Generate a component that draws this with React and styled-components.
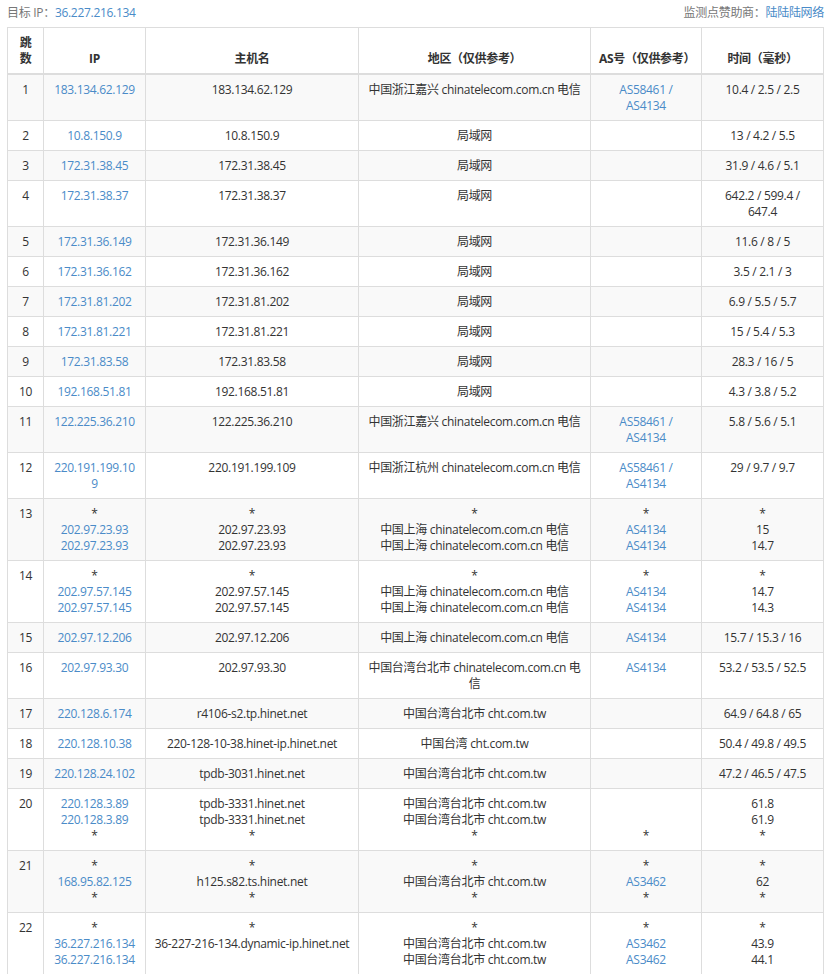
import React from "react";
import styled, { createGlobalStyle } from "styled-components";

const Global = createGlobalStyle`
  body { margin: 0; background: #fff; font-family: "Open Sans", "Noto Sans CJK SC", sans-serif; font-size: 12px; color: #333; letter-spacing: -0.3px; }
`;

const Page = styled.div`
  padding: 0 7px;
`;
const TopBar = styled.div`
  display: flex;
  justify-content: space-between;
  align-items: center;
  height: 27px;
  color: #777;
  line-height: 16px;
  padding-bottom: 2px;
  box-sizing: border-box;
`;
const Link = styled.span`
  color: #4a8bc8;
`;
const Table = styled.table`
  width: 816px;
  border-collapse: collapse;
  table-layout: fixed;
`;
const Th = styled.th`
  border: 1px solid #ddd;
  border-bottom: 2px solid #ddd;
  padding: 7px 8px 6px;
  line-height: 16px;
  font-weight: bold;
  vertical-align: bottom;
  text-align: center;
  color: #333;
`;
const Tr = styled.tr`
  background: ${(p) => (p.$odd ? "#f9f9f9" : "#fff")};
`;
const Td = styled.td`
  border: 1px solid #ddd;
  padding: 7px 8px 6px;
  line-height: 16px;
  vertical-align: top;
  text-align: center;
  color: ${(p) => (p.$link ? "#4a8bc8" : "#333")};
  word-break: break-word;
`;
const Line = styled.div`
  min-height: 16px;
  color: ${(p) => (p.$plain ? "#333" : "inherit")};
`;

const T = "chinatelecom.com.cn 电信";
const rows = [
  [["183.134.62.129"], ["183.134.62.129"], ["中国浙江嘉兴 " + T], ["AS58461 / AS4134"], ["10.4 / 2.5 / 2.5"]],
  [["10.8.150.9"], ["10.8.150.9"], ["局域网"], [""], ["13 / 4.2 / 5.5"]],
  [["172.31.38.45"], ["172.31.38.45"], ["局域网"], [""], ["31.9 / 4.6 / 5.1"]],
  [["172.31.38.37"], ["172.31.38.37"], ["局域网"], [""], ["642.2 / 599.4 / 647.4"]],
  [["172.31.36.149"], ["172.31.36.149"], ["局域网"], [""], ["11.6 / 8 / 5"]],
  [["172.31.36.162"], ["172.31.36.162"], ["局域网"], [""], ["3.5 / 2.1 / 3"]],
  [["172.31.81.202"], ["172.31.81.202"], ["局域网"], [""], ["6.9 / 5.5 / 5.7"]],
  [["172.31.81.221"], ["172.31.81.221"], ["局域网"], [""], ["15 / 5.4 / 5.3"]],
  [["172.31.83.58"], ["172.31.83.58"], ["局域网"], [""], ["28.3 / 16 / 5"]],
  [["192.168.51.81"], ["192.168.51.81"], ["局域网"], [""], ["4.3 / 3.8 / 5.2"]],
  [["122.225.36.210"], ["122.225.36.210"], ["中国浙江嘉兴 " + T], ["AS58461 / AS4134"], ["5.8 / 5.6 / 5.1"]],
  [["220.191.199.109"], ["220.191.199.109"], ["中国浙江杭州 " + T], ["AS58461 / AS4134"], ["29 / 9.7 / 9.7"]],
  [["*", "202.97.23.93", "202.97.23.93"], ["*", "202.97.23.93", "202.97.23.93"], ["*", "中国上海 " + T, "中国上海 " + T], ["*", "AS4134", "AS4134"], ["*", "15", "14.7"]],
  [["*", "202.97.57.145", "202.97.57.145"], ["*", "202.97.57.145", "202.97.57.145"], ["*", "中国上海 " + T, "中国上海 " + T], ["*", "AS4134", "AS4134"], ["*", "14.7", "14.3"]],
  [["202.97.12.206"], ["202.97.12.206"], ["中国上海 " + T], ["AS4134"], ["15.7 / 15.3 / 16"]],
  [["202.97.93.30"], ["202.97.93.30"], ["中国台湾台北市 chinatelecom.com.cn 电\u200b信"], ["AS4134"], ["53.2 / 53.5 / 52.5"]],
  [["220.128.6.174"], ["r4106-s2.tp.hinet.net"], ["中国台湾台北市 cht.com.tw"], [""], ["64.9 / 64.8 / 65"]],
  [["220.128.10.38"], ["220-128-10-38.hinet-ip.hinet.net"], ["中国台湾 cht.com.tw"], [""], ["50.4 / 49.8 / 49.5"]],
  [["220.128.24.102"], ["tpdb-3031.hinet.net"], ["中国台湾台北市 cht.com.tw"], [""], ["47.2 / 46.5 / 47.5"]],
  [["220.128.3.89", "220.128.3.89", "*"], ["tpdb-3331.hinet.net", "tpdb-3331.hinet.net", "*"], ["中国台湾台北市 cht.com.tw", "中国台湾台北市 cht.com.tw", "*"], ["", "", "*"], ["61.8", "61.9", "*"]],
  [["*", "168.95.82.125", "*"], ["*", "h125.s82.ts.hinet.net", "*"], ["*", "中国台湾台北市 cht.com.tw", "*"], ["*", "AS3462", "*"], ["*", "62", "*"]],
  [["*", "36.227.216.134", "36.227.216.134"], ["*", "36-227-216-134.dynamic-ip.hinet.net"], ["*", "中国台湾台北市 cht.com.tw", "中国台湾台北市 cht.com.tw"], ["*", "AS3462", "AS3462"], ["*", "43.9", "44.1"]],
];

const linkCols = [true, false, false, true, false];

export default function App() {
  return (
    <Page>
      <Global />
      <TopBar>
        <span>目标 IP：<Link>36.227.216.134</Link></span>
        <span>监测点赞助商：<Link>陆陆陆网络</Link></span>
      </TopBar>
      <Table>
        <colgroup>
          <col style={{ width: 36 }} />
          <col style={{ width: 102 }} />
          <col style={{ width: 213 }} />
          <col style={{ width: 232 }} />
          <col style={{ width: 111 }} />
          <col style={{ width: 122 }} />
        </colgroup>
        <thead>
          <tr>
            <Th>跳数</Th>
            <Th>IP</Th>
            <Th>主机名</Th>
            <Th>地区（仅供参考）</Th>
            <Th>AS号（仅供参考）</Th>
            <Th>时间（毫秒）</Th>
          </tr>
        </thead>
        <tbody>
          {rows.map((r, i) => (
            <Tr key={i} $odd={i % 2 === 0}>
              <Td>{i + 1}</Td>
              {r.map((lines, j) => (
                <Td key={j} $link={linkCols[j]}>
                  {lines.map((l, k) => (
                    <Line key={k} $plain={l === "*"}>{l}</Line>
                  ))}
                </Td>
              ))}
            </Tr>
          ))}
        </tbody>
      </Table>
    </Page>
  );
}
